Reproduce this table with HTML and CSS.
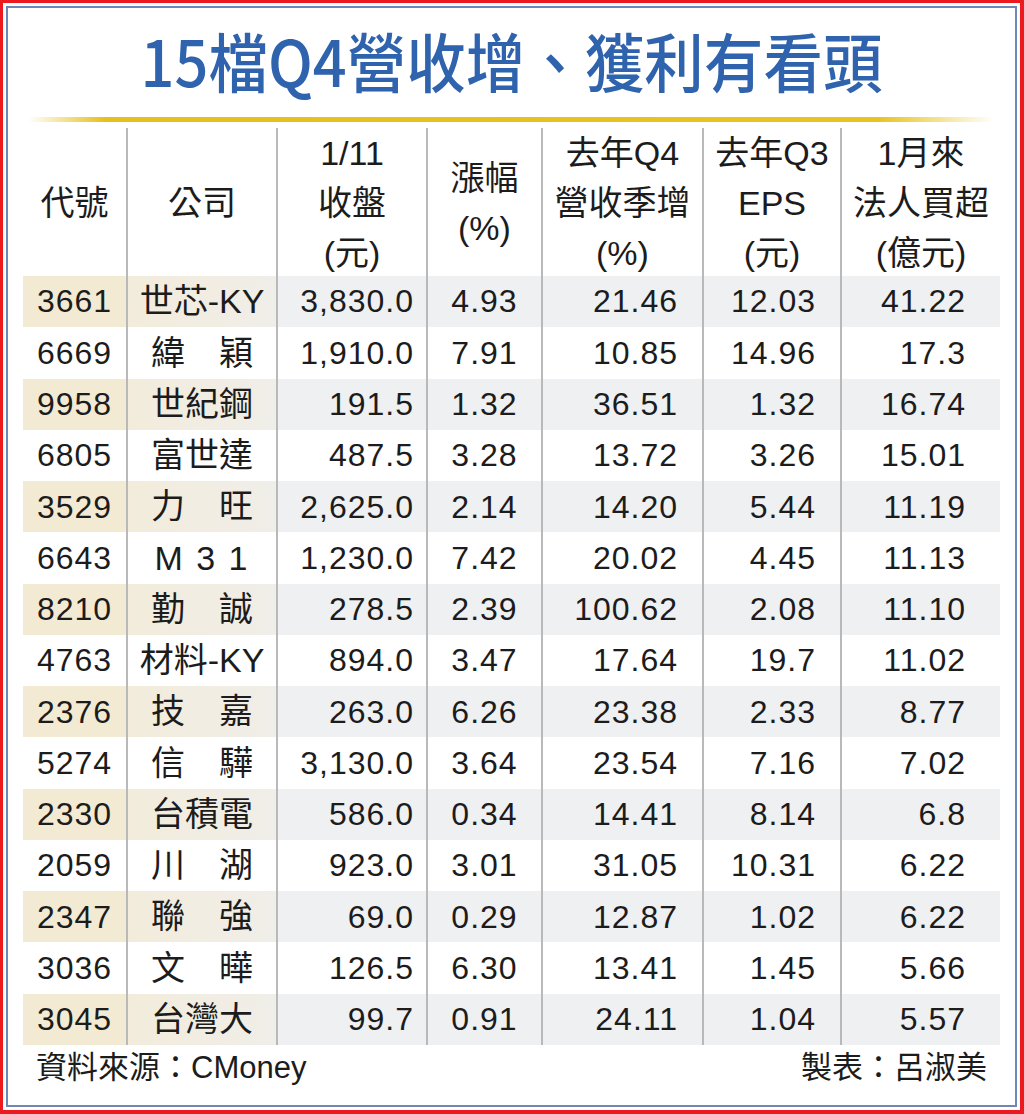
FILE: index.html
```html
<!DOCTYPE html>
<html lang="zh-Hant">
<head>
<meta charset="utf-8">
<title>15檔Q4營收增、獲利有看頭</title>
<link rel="stylesheet" href="styles.css">
</head>
<body>
<div class="frame">
  <div class="inner">
    <h1 class="title">15檔Q4營收增、獲利有看頭</h1>
    <div class="rule"></div>
    <div class="table">
      <div class="row head">
        <div class="c">代號</div>
        <div class="c">公司</div>
        <div class="c">1/11<br>收盤<br>(元)</div>
        <div class="c">漲幅<br>(%)</div>
        <div class="c">去年Q4<br>營收季增<br>(%)</div>
        <div class="c">去年Q3<br>EPS<br>(元)</div>
        <div class="c">1月來<br>法人買超<br>(億元)</div>
      </div>
      <div class="row odd"><div class="c code">3661</div><div class="c name">世芯-KY</div><div class="c price">3,830.0</div><div class="c chg">4.93</div><div class="c rev">21.46</div><div class="c eps">12.03</div><div class="c buy">41.22</div></div>
      <div class="row"><div class="c code">6669</div><div class="c name">緯　穎</div><div class="c price">1,910.0</div><div class="c chg">7.91</div><div class="c rev">10.85</div><div class="c eps">14.96</div><div class="c buy">17.3</div></div>
      <div class="row odd"><div class="c code">9958</div><div class="c name">世紀鋼</div><div class="c price">191.5</div><div class="c chg">1.32</div><div class="c rev">36.51</div><div class="c eps">1.32</div><div class="c buy">16.74</div></div>
      <div class="row"><div class="c code">6805</div><div class="c name">富世達</div><div class="c price">487.5</div><div class="c chg">3.28</div><div class="c rev">13.72</div><div class="c eps">3.26</div><div class="c buy">15.01</div></div>
      <div class="row odd"><div class="c code">3529</div><div class="c name">力　旺</div><div class="c price">2,625.0</div><div class="c chg">2.14</div><div class="c rev">14.20</div><div class="c eps">5.44</div><div class="c buy">11.19</div></div>
      <div class="row"><div class="c code">6643</div><div class="c name m31">M 3 1</div><div class="c price">1,230.0</div><div class="c chg">7.42</div><div class="c rev">20.02</div><div class="c eps">4.45</div><div class="c buy">11.13</div></div>
      <div class="row odd"><div class="c code">8210</div><div class="c name">勤　誠</div><div class="c price">278.5</div><div class="c chg">2.39</div><div class="c rev">100.62</div><div class="c eps">2.08</div><div class="c buy">11.10</div></div>
      <div class="row"><div class="c code">4763</div><div class="c name">材料-KY</div><div class="c price">894.0</div><div class="c chg">3.47</div><div class="c rev">17.64</div><div class="c eps">19.7</div><div class="c buy">11.02</div></div>
      <div class="row odd"><div class="c code">2376</div><div class="c name">技　嘉</div><div class="c price">263.0</div><div class="c chg">6.26</div><div class="c rev">23.38</div><div class="c eps">2.33</div><div class="c buy">8.77</div></div>
      <div class="row"><div class="c code">5274</div><div class="c name">信　驊</div><div class="c price">3,130.0</div><div class="c chg">3.64</div><div class="c rev">23.54</div><div class="c eps">7.16</div><div class="c buy">7.02</div></div>
      <div class="row odd"><div class="c code">2330</div><div class="c name">台積電</div><div class="c price">586.0</div><div class="c chg">0.34</div><div class="c rev">14.41</div><div class="c eps">8.14</div><div class="c buy">6.8</div></div>
      <div class="row"><div class="c code">2059</div><div class="c name">川　湖</div><div class="c price">923.0</div><div class="c chg">3.01</div><div class="c rev">31.05</div><div class="c eps">10.31</div><div class="c buy">6.22</div></div>
      <div class="row odd"><div class="c code">2347</div><div class="c name">聯　強</div><div class="c price">69.0</div><div class="c chg">0.29</div><div class="c rev">12.87</div><div class="c eps">1.02</div><div class="c buy">6.22</div></div>
      <div class="row"><div class="c code">3036</div><div class="c name">文　曄</div><div class="c price">126.5</div><div class="c chg">6.30</div><div class="c rev">13.41</div><div class="c eps">1.45</div><div class="c buy">5.66</div></div>
      <div class="row odd"><div class="c code">3045</div><div class="c name">台灣大</div><div class="c price">99.7</div><div class="c chg">0.91</div><div class="c rev">24.11</div><div class="c eps">1.04</div><div class="c buy">5.57</div></div>
    </div>
    <div class="foot"><span>資料來源：CMoney</span><span>製表：呂淑美</span></div>
  </div>
</div>
</body>
</html>
```

FILE: styles.css
```css
html, body {
  margin: 0;
  padding: 0;
  background: #ffffff;
}

.frame {
  width: 1024px;
  height: 1114px;
  box-sizing: border-box;
  border-style: solid;
  border-color: #ec1a1f;
  border-width: 3px 4px 4px 3px;
  padding: 3px;
  background: #ffffff;
}

.inner {
  height: 100%;
  box-sizing: border-box;
  border: 2px solid #7087b3;
  display: flex;
  flex-direction: column;
  font-family: "Liberation Sans", "Noto Sans CJK TC", sans-serif;
  color: #1c1c1c;
}

.title {
  margin: 19px 0 0;
  height: 64px;
  font-family: "Noto Sans CJK TC", sans-serif;
  font-size: 64px;
  line-height: 64px;
  font-weight: 500;
  color: #2f63ad;
  text-align: center;
  white-space: nowrap;
  transform: scaleX(0.93);
}

.rule {
  margin: 26px 0 0 20px;
  width: 967px;
  height: 5px;
  background: linear-gradient(to right, rgba(232, 195, 31, 0) 0%, #e6c01c 8%, #e8c422 88%, rgba(232, 195, 31, 0) 100%);
  border-radius: 3px;
}

.table {
  margin: 6px 0 0 15px;
  width: 977px;
  display: flex;
  flex-direction: column;
}

.row {
  display: grid;
  grid-template-columns: 103px 150px 150px 115px 161px 138px 160px;
  height: 51.27px;
}

.row.head {
  height: 148px;
}

.c {
  display: flex;
  align-items: center;
  box-sizing: border-box;
  font-size: 32px;
  letter-spacing: 1px;
  line-height: 1.2;
  white-space: nowrap;
}

.c + .c {
  border-left: 2px solid #b9b9b9;
}

.head .c {
  justify-content: center;
  text-align: center;
  font-size: 34px;
  line-height: 50px;
  letter-spacing: 0;
}

.code, .chg {
  justify-content: center;
}

.name {
  justify-content: center;
  font-size: 34px;
  letter-spacing: 0;
}

.name.m31 {
  letter-spacing: 2px;
}

.price {
  justify-content: flex-end;
  padding-right: 12px;
}

.rev, .eps {
  justify-content: flex-end;
  padding-right: 24px;
}

.buy {
  justify-content: flex-end;
  padding-right: 34px;
}

.odd .c {
  background: #eff0f2;
}

.odd .code {
  background: #f3ead3;
}

.odd .name {
  background: linear-gradient(to right, #f3ecdc, #f0eee9);
}

.foot {
  margin: 0 0 0 15px;
  width: 977px;
  box-sizing: border-box;
  padding: 0 13px;
  display: flex;
  justify-content: space-between;
  font-size: 31px;
  line-height: 46px;
  color: #1c1c1c;
}
```
